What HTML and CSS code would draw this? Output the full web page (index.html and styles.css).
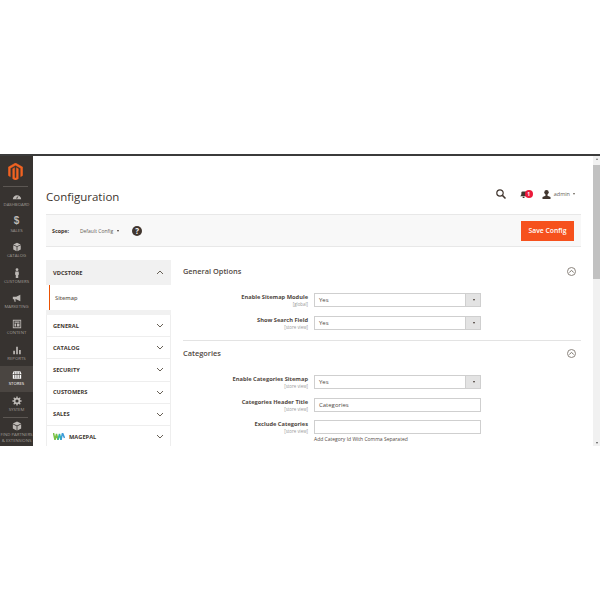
FILE: index.html
```html
<!DOCTYPE html>
<html lang="en">
<head>
    <meta charset="UTF-8">
    <title>Configuration</title>
    <link rel="stylesheet" href="styles.css">
</head>
<body>
    <div class="frame">
        <!-- Left admin menu -->
        <nav class="menu">
            <div class="logo">
                <svg width="15" height="17" viewBox="0 0 16 19"><path fill="#f26322" stroke="#f26322" stroke-width=".5" d="M8 0 16 4.600V14L13.800 15.300V5.900L8 2.600 2.200 5.900V15.300L0 14V4.600ZM7 5.200V16.300L8 16.900 9 16.300V5.200L11.100 6.400V17.500L8 19.300 4.900 17.500V6.400Z"/></svg>
            </div>
            <div class="menu-item">
                <svg class="menu-icon" viewBox="0 0 12 12"><path fill="#bdb9b5" d="M1 10a5 5 0 0 1 10 0ZM6 9.500 8 5.500 5 8.500Z" fill-rule="evenodd"/></svg>
                <span>DASHBOARD</span>
            </div>
            <div class="menu-item">
                <span class="dollar">$</span>
                <span>SALES</span>
            </div>
            <div class="menu-item">
                <svg class="menu-icon" viewBox="0 0 12 12"><path fill="#bdb9b5" d="M6 1 10.500 3 6 5 1.500 3ZM1.500 4 5.500 5.800V11L1.500 9ZM10.500 4V9L6.500 11V5.800Z"/></svg>
                <span>CATALOG</span>
            </div>
            <div class="menu-item">
                <svg class="menu-icon" viewBox="0 0 12 12"><circle cx="6" cy="2" r="1.700" fill="#bdb9b5"/><path fill="#bdb9b5" d="M4 4.200H8L8.400 8H7.500V12H4.500V8H3.600Z"/></svg>
                <span>CUSTOMERS</span>
            </div>
            <div class="menu-item">
                <svg class="menu-icon" viewBox="0 0 12 12"><path fill="#bdb9b5" d="M1 4.500H5L10 2V10L5 7.500H4L4.500 10.500H3L2.500 7.500H1Z"/></svg>
                <span>MARKETING</span>
            </div>
            <div class="menu-item">
                <svg class="menu-icon" viewBox="0 0 12 12"><path fill="#bdb9b5" fill-rule="evenodd" d="M1 1H11V11H1ZM2 2V10H10V2ZM3 3H9V4.500H3ZM3 5.500H5V9H3ZM6 5.500H9V9H6Z"/></svg>
                <span>CONTENT</span>
            </div>
            <div class="menu-item">
                <svg class="menu-icon" viewBox="0 0 12 12"><path fill="#bdb9b5" d="M1.500 7H3.500V11H1.500ZM5 2H7V11H5ZM8.500 6H10.500V11H8.500Z"/></svg>
                <span>REPORTS</span>
            </div>
            <div class="menu-item active">
                <svg class="menu-icon" viewBox="0 0 12 12"><path fill="#fff" d="M2 1.500H10L11.500 5H.5ZM1 6H11V10.500H1Z"/><path stroke="#4a4541" stroke-width=".7" d="M3 2V10M5 2V10M7 2V10M9 2V10"/></svg>
                <span>STORES</span>
            </div>
            <div class="menu-item">
                <svg class="menu-icon" viewBox="0 0 12 12"><circle cx="6" cy="6" r="2.900" fill="none" stroke="#bdb9b5" stroke-width="2"/><path stroke="#bdb9b5" stroke-width="1.600" d="M6 .5V2.500M6 9.500V11.500M.5 6H2.500M9.500 6H11.500M2.100 2.100 3.500 3.500M8.500 8.500 9.900 9.900M2.100 9.900 3.500 8.500M8.500 3.500 9.900 2.100"/></svg>
                <span>SYSTEM</span>
            </div>
            <div class="menu-item partners">
                <svg class="menu-icon" viewBox="0 0 12 12"><path fill="#bdb9b5" d="M6 .5 11 3 6 5.500 1 3ZM1 4 5.500 6.200V11.500L1 9ZM11 4V9L6.500 11.500V6.200Z"/></svg>
                <span>FIND PARTNERS<br>&amp; EXTENSIONS</span>
            </div>
        </nav>

        <main class="page">
            <header class="page-head">
                <h1>Configuration</h1>
                <div class="actions">
                    <svg class="search" width="10" height="10" viewBox="0 0 10 10"><circle cx="4" cy="4" r="3.200" fill="none" stroke="#41362f" stroke-width="1.200"/><path stroke="#41362f" stroke-width="1.500" d="M6.400 6.400 9.500 9.500"/></svg>
                    <div class="notify">
                        <svg width="8" height="7" viewBox="0 0 9 8"><path fill="#41362f" d="M1.500 1.500Q1.500 .5 3 .5H7V6H0Q1.500 5 1.500 3ZM3 6.500H5V8H3Z"/></svg>
                        <span class="badge">1</span>
                    </div>
                    <div class="user">
                        <svg width="9" height="9" viewBox="0 0 9 9"><circle cx="4.500" cy="2.200" r="2.200" fill="#41362f"/><path fill="#41362f" d="M3.500 4H5.500V5.800L8.500 7V9H.5V7L3.500 5.800Z"/></svg>
                        <span>admin</span>
                        <i class="caret"></i>
                    </div>
                </div>
            </header>

            <div class="toolbar">
                <div class="scope">
                    <b>Scope:</b>
                    <span class="scope-value">Default Config</span>
                    <i class="caret dark"></i>
                    <span class="help">?</span>
                </div>
                <button class="save">Save Config</button>
            </div>

            <div class="columns">
                <!-- Config tabs -->
                <aside class="tabs">
                    <div class="tab-head">
                        <span>VDCSTORE</span>
                        <svg class="chev" viewBox="0 0 8 5"><path d="M1 4 4 1 7 4"/></svg>
                    </div>
                    <div class="tab-link"><span>Sitemap</span></div>
                    <div class="tab-gap"></div>
                    <div class="tab-row"><span>GENERAL</span><svg class="chev" viewBox="0 0 8 5"><path d="M1 1 4 4 7 1"/></svg></div>
                    <div class="tab-row"><span>CATALOG</span><svg class="chev" viewBox="0 0 8 5"><path d="M1 1 4 4 7 1"/></svg></div>
                    <div class="tab-row"><span>SECURITY</span><svg class="chev" viewBox="0 0 8 5"><path d="M1 1 4 4 7 1"/></svg></div>
                    <div class="tab-row"><span>CUSTOMERS</span><svg class="chev" viewBox="0 0 8 5"><path d="M1 1 4 4 7 1"/></svg></div>
                    <div class="tab-row"><span>SALES</span><svg class="chev" viewBox="0 0 8 5"><path d="M1 1 4 4 7 1"/></svg></div>
                    <div class="tab-row">
                        <span class="magepal">
                            <svg width="12" height="7" viewBox="0 0 12 7"><path fill="none" stroke="#7ac143" stroke-width="1.500" d="M.5 0 2 7 3.500 1 5 7"/><path fill="none" stroke="#35b5a5" stroke-width="1.500" d="M5 7 6.500 1 8 7"/><path fill="none" stroke="#3b9bd9" stroke-width="1.500" d="M8 7 9.500 0 11.500 5"/></svg>
                            MAGEPAL
                        </span>
                        <svg class="chev" viewBox="0 0 8 5"><path d="M1 1 4 4 7 1"/></svg>
                    </div>
                </aside>

                <section class="form">
                    <div class="section-head first">
                        <h2>General Options</h2>
                        <span class="collapse"><svg viewBox="0 0 8 8"><path d="M1.500 5 4 2.800 6.500 5"/></svg></span>
                    </div>
                    <div class="field">
                        <label>Enable Sitemap Module<small>[global]</small></label>
                        <div class="select">Yes</div>
                    </div>
                    <div class="field">
                        <label>Show Search Field<small>[store view]</small></label>
                        <div class="select">Yes</div>
                    </div>
                    <hr>
                    <div class="section-head">
                        <h2>Categories</h2>
                        <span class="collapse"><svg viewBox="0 0 8 8"><path d="M1.500 5 4 2.800 6.500 5"/></svg></span>
                    </div>
                    <div class="field">
                        <label>Enable Categories Sitemap<small>[store view]</small></label>
                        <div class="select">Yes</div>
                    </div>
                    <div class="field tight">
                        <label>Categories Header Title<small>[store view]</small></label>
                        <div class="input">Categories</div>
                    </div>
                    <div class="field tight">
                        <label>Exclude Categories<small>[store view]</small></label>
                        <div>
                            <div class="input"></div>
                            <p class="note">Add Category Id With Comma Separated</p>
                        </div>
                    </div>
                </section>
            </div>
        </main>

        <div class="scrollbar">
            <i class="arrow up"></i>
            <div class="thumb"></div>
            <i class="arrow down"></i>
        </div>
    </div>
</body>
</html>
```

FILE: styles.css
```css
body {
    font-family: 'Open Sans', sans-serif;
    margin: 0;
    padding: 0;
    background-color: #fff;
    color: #41362f;
}

.frame {
    display: flex;
    margin-top: 154px;
    height: 290px;
    border-top: 2px solid #3b3b3b;
    overflow: hidden;
}

/* admin menu */
.menu {
    width: 33px;
    flex: none;
    background-color: #373330;
    color: #a09c96;
}

.logo {
    height: 31px;
    display: flex;
    justify-content: center;
    padding: 7px 2px 0 0;
    box-sizing: border-box;
    position: relative;
}

.logo::after,
.partners::before {
    content: "";
    position: absolute;
    left: 3px;
    right: 5px;
    top: 30px;
    height: 1px;
    background-color: #5c5753;
}

.menu-item {
    height: 25.6px;
    display: flex;
    flex-direction: column;
    align-items: center;
    padding-top: 4px;
    box-sizing: border-box;
    font-size: 4.3px;
    line-height: 6px;
    white-space: nowrap;
    position: relative;
}

.menu-icon {
    width: 10px;
    height: 10px;
    flex: none;
}

.dollar {
    height: 10px;
    font-family: 'Liberation Sans', sans-serif;
    font-size: 10px;
    line-height: 8px;
    font-weight: 700;
    color: #bdb9b5;
}

.menu-item.active {
    background-color: #4a4541;
    color: #fff;
}

.partners {
    text-align: center;
    height: 28px;
}

.partners::before {
    top: 0;
}

/* page */
.page {
    flex: 1;
    min-width: 0;
    padding: 0 12px 0 13px;
}

.page-head {
    height: 58px;
    display: flex;
    justify-content: space-between;
    align-items: center;
    padding: 22px 6px 0 0;
    box-sizing: border-box;
}

h1 {
    margin: 0;
    font-size: 11.5px;
    font-weight: 400;
    color: #41362f;
}

.actions {
    display: flex;
    align-items: center;
    margin-bottom: 4px;
    font-size: 5.5px;
    color: #676056;
}

.search {
    margin-right: 14px;
}

.notify {
    display: flex;
    align-items: center;
    margin-right: 9px;
}

.badge {
    width: 8px;
    height: 8px;
    margin-left: -3px;
    border-radius: 50%;
    background-color: #eb1a3a;
    color: #fff;
    font-size: 5px;
    font-weight: 700;
    line-height: 8px;
    text-align: center;
}

.user {
    display: flex;
    align-items: center;
    gap: 3px;
}

.caret {
    width: 0;
    height: 0;
    border-left: 1.5px solid transparent;
    border-right: 1.5px solid transparent;
    border-top: 2px solid #676056;
}

.caret.dark {
    border-top-color: #41362f;
    margin-left: 4px;
}

.toolbar {
    height: 33px;
    box-sizing: border-box;
    background-color: #f8f8f8;
    border-top: 1px solid #e8e8e8;
    border-bottom: 1px solid #e8e8e8;
    display: flex;
    justify-content: space-between;
    align-items: center;
    padding: 0 7px 0 6px;
}

.scope {
    display: flex;
    align-items: center;
    font-size: 5.3px;
}

.scope-value {
    margin-left: 11px;
    font-size: 5px;
    color: #676056;
}

.help {
    width: 10px;
    height: 10px;
    margin-left: 13px;
    border-radius: 50%;
    background-color: #41362f;
    color: #f8f8f8;
    font-size: 8px;
    font-weight: 700;
    line-height: 10px;
    text-align: center;
}

.save {
    width: 53px;
    height: 20px;
    padding: 0;
    border: none;
    background-color: #f6511d;
    color: #fff;
    font-family: inherit;
    font-size: 6.8px;
    font-weight: 600;
}

.columns {
    display: flex;
    padding-top: 13px;
}

/* tabs on the left */
.tabs {
    width: 125px;
    flex: none;
    font-size: 5.7px;
    font-weight: 700;
}

.tab-head {
    height: 25px;
    background-color: #f1f1f1;
    display: flex;
    justify-content: space-between;
    align-items: center;
    padding: 0 7px;
}

.tab-link {
    height: 25px;
    margin-left: 3px;
    border-left: 1px solid #eb5202;
    display: flex;
    align-items: center;
    padding-left: 5px;
    font-weight: 600;
    color: #676056;
}

.tab-gap {
    height: 5px;
    background-color: #f1f1f1;
}

.tab-row {
    height: 22.2px;
    box-sizing: border-box;
    border: 1px solid #eee;
    border-top: none;
    display: flex;
    justify-content: space-between;
    align-items: center;
    padding: 0 6px;
}

.magepal {
    display: flex;
    align-items: center;
    gap: 4px;
}

.chev {
    width: 8px;
    height: 5px;
    fill: none;
    stroke: #676056;
    stroke-width: 1;
}

/* form on the right */
.form {
    flex: 1;
    margin-left: 12px;
}

.section-head {
    height: 24px;
    margin-bottom: 10px;
    display: flex;
    justify-content: space-between;
    align-items: center;
    padding-right: 5px;
}

.section-head.first {
    height: 22px;
    margin-bottom: 11px;
}

h2 {
    margin: 0;
    font-size: 7.4px;
    font-weight: 600;
    color: #514943;
}

.collapse {
    width: 7px;
    height: 7px;
    border: 1px solid #8a837c;
    border-radius: 50%;
}

.collapse svg {
    display: block;
    fill: none;
    stroke: #676056;
    stroke-width: 1;
}

.field {
    display: flex;
    margin-bottom: 9px;
}

.field.tight {
    margin-bottom: 8px;
}

label {
    width: 125px;
    flex: none;
    text-align: right;
    font-size: 5.7px;
    font-weight: 700;
    line-height: 8px;
    color: #514943;
}

label small {
    display: block;
    font-size: 4.4px;
    font-weight: 400;
    line-height: 6px;
    color: #999;
}

.select,
.input {
    width: 167px;
    height: 14px;
    margin-left: 6px;
    box-sizing: border-box;
    border: 1px solid #cfcfcf;
    padding-left: 4px;
    font-size: 6px;
    line-height: 12px;
    color: #514943;
    background-color: #fff;
}

.select {
    position: relative;
}

.select::before {
    content: "";
    position: absolute;
    top: 0;
    right: 0;
    bottom: 0;
    width: 14px;
    background-color: #e3e3e3;
    border-left: 1px solid #cfcfcf;
}

.select::after {
    content: "";
    position: absolute;
    top: 5px;
    right: 5px;
    border-left: 1.5px solid transparent;
    border-right: 1.5px solid transparent;
    border-top: 2px solid #41362f;
}

.note {
    margin: 2px 0 0 6px;
    font-size: 5px;
    color: #514943;
}

hr {
    margin: 10px 0 0;
    border: none;
    height: 1px;
    background-color: #e3e3e3;
}

/* page scrollbar */
.scrollbar {
    width: 7px;
    flex: none;
    background-color: #f1f1f1;
    display: flex;
    flex-direction: column;
    align-items: center;
}

.thumb {
    width: 100%;
    height: 114px;
    margin-top: 5px;
    background-color: #c1c1c1;
}

.arrow {
    width: 0;
    height: 0;
    border-left: 1.5px solid transparent;
    border-right: 1.5px solid transparent;
}

.arrow.up {
    margin-top: 2px;
    border-bottom: 2px solid #777;
}

.arrow.down {
    margin-top: auto;
    margin-bottom: 2px;
    border-top: 2px solid #555;
}
```
